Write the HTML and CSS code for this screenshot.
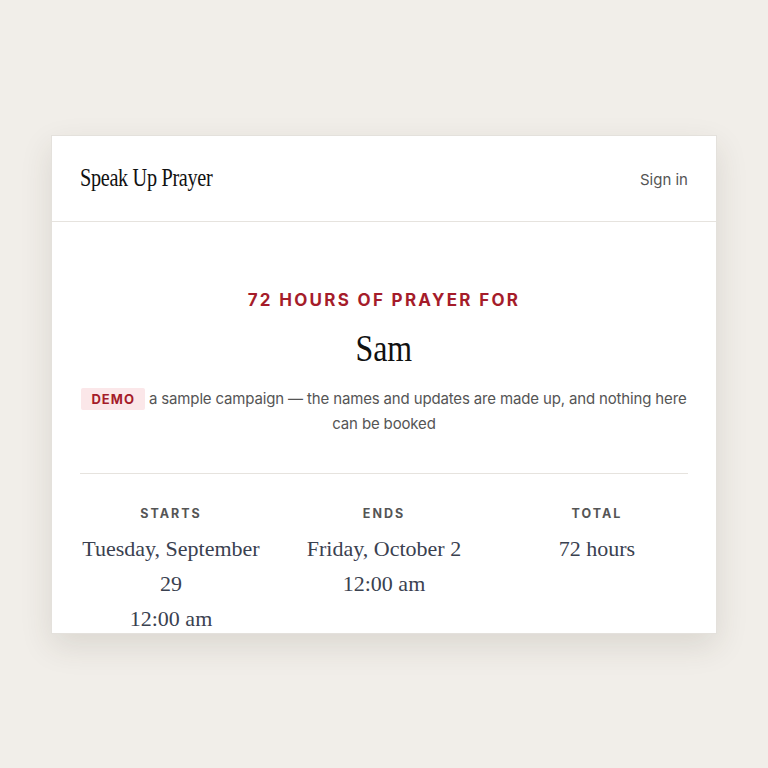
FILE: index.html
```html
<!DOCTYPE html>
<html>

<head>
    <title>Speak Up Prayer</title>
    <link rel="stylesheet" href="styles.css">
</head>

<body>
    <div class="card">
        <div class="header">
            <div class="logo">Speak Up Prayer</div>
            <a class="sign-in" href="#">Sign in</a>
        </div>

        <div class="content">
            <div class="eyebrow">72 Hours of Prayer For</div>
            <h1 class="name"><span>Sam</span></h1>
            <p class="note"><span class="badge">DEMO</span> a sample campaign — the names and updates are made up, and nothing here can be booked</p>

            <div class="stats">
                <div class="stat">
                    <div class="label">Starts</div>
                    <div class="value">Tuesday, September 29</div>
                    <div class="value">12:00 am</div>
                </div>
                <div class="stat">
                    <div class="label">Ends</div>
                    <div class="value">Friday, October 2</div>
                    <div class="value">12:00 am</div>
                </div>
                <div class="stat">
                    <div class="label">Total</div>
                    <div class="value">72 hours</div>
                </div>
            </div>
        </div>
    </div>
</body>

</html>
```

FILE: styles.css
```css
body {
    margin: 0;
    height: 100vh;
    display: flex;
    align-items: center;
    justify-content: center;
    background-color: #f1eee9;
    font-family: Inter, "Noto Sans", sans-serif;
}

.card {
    width: 666px;
    height: 499px;
    overflow: hidden;
    background-color: white;
    border: 1px solid #e4e1dc;
    box-sizing: border-box;
    box-shadow: 0 12px 30px rgba(60, 50, 30, 0.12);
}

.header {
    display: flex;
    align-items: center;
    justify-content: space-between;
    height: 85px;
    padding: 0 28px;
    border-bottom: 1px solid #e6e3de;
}

/* condensed display serif look */
.logo {
    font-family: "Liberation Serif", serif;
    font-size: 25px;
    letter-spacing: -0.4px;
    color: #111;
    transform: scaleX(0.81);
    transform-origin: left center;
}

.sign-in {
    font-size: 15px;
    color: #555;
    text-decoration: none;
    margin-top: 3px;
}

.content {
    padding: 68px 28px 0;
    text-align: center;
}

.eyebrow {
    font-size: 17px;
    font-weight: 700;
    letter-spacing: 2.3px;
    text-transform: uppercase;
    color: #a51c2a;
}

.name {
    margin: 16px 0 0;
    font-family: "Liberation Serif", serif;
    font-size: 38px;
    font-weight: normal;
    color: #111;
}

.name span {
    display: inline-block;
    transform: scaleX(0.84);
}

.note {
    margin: 16px 0 0;
    font-size: 15px;
    letter-spacing: -0.15px;
    line-height: 25px;
    color: #555;
    padding-bottom: 37px;
    border-bottom: 1px solid #e6e3de;
}

.badge {
    display: inline-block;
    padding: 0 10px;
    line-height: 22px;
    font-size: 13px;
    font-weight: 700;
    letter-spacing: 1px;
    color: #a51c2a;
    background-color: #fbe7e9;
    border-radius: 2px;
}

.stats {
    display: grid;
    grid-template-columns: repeat(3, 1fr);
    gap: 31px;
    padding-top: 32px;
}

.label {
    font-size: 12.5px;
    font-weight: 700;
    letter-spacing: 2px;
    text-transform: uppercase;
    color: #555;
    margin-bottom: 10px;
}

.value {
    font-family: "Liberation Serif", serif;
    font-size: 22px;
    line-height: 35px;
    color: #3a4150;
}
```
